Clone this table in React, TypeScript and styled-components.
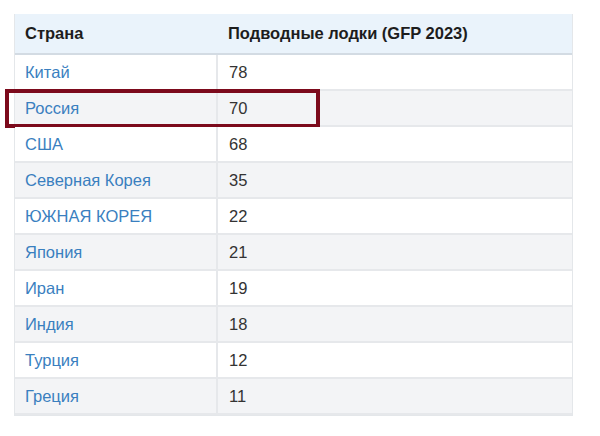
import React from "react";
import styled, { createGlobalStyle } from "styled-components";

interface Row {
  country: string;
  subs: number;
}

const rows: Row[] = [
  { country: "Китай", subs: 78 },
  { country: "Россия", subs: 70 },
  { country: "США", subs: 68 },
  { country: "Северная Корея", subs: 35 },
  { country: "ЮЖНАЯ КОРЕЯ", subs: 22 },
  { country: "Япония", subs: 21 },
  { country: "Иран", subs: 19 },
  { country: "Индия", subs: 18 },
  { country: "Турция", subs: 12 },
  { country: "Греция", subs: 11 },
];

const GlobalStyle = createGlobalStyle`
  body {
    margin: 0;
    background: #ffffff;
    font-family: "Liberation Sans", Arial, sans-serif;
  }
`;

const Page = styled.div`
  width: 600px;
  height: 436px;
  padding: 14px 0 0 14px;
  box-sizing: border-box;
`;

const Table = styled.div`
  width: 559px;
  border: 1px solid #e4e7ea;
  border-top: none;
  box-sizing: border-box;
`;

const Header = styled.div`
  display: grid;
  grid-template-columns: 203px 1fr;
  height: 39px;
  align-items: center;
  background: #eaf3fb;
  border-bottom: 2px solid #d3dbe3;
  font-size: 16.5px;
  font-weight: bold;
  color: #1d1d1d;
`;

const HeadCell = styled.div`
  padding-left: 10px;
`;

const BodyRow = styled.div<{ $striped: boolean }>`
  position: relative;
  display: grid;
  grid-template-columns: 203px 1fr;
  height: 36px;
  background: ${(p) => (p.$striped ? "#f3f4f6" : "#ffffff")};
  border-bottom: 2px solid #e6e8eb;
  box-sizing: border-box;
  font-size: 16.5px;
`;

const Cell = styled.div<{ $first?: boolean }>`
  display: flex;
  align-items: center;
  padding-left: ${(p) => (p.$first ? "10px" : "11px")};
  color: ${(p) => (p.$first ? "#3a7fbf" : "#333333")};
  border-right: ${(p) => (p.$first ? "2px solid #e6e8eb" : "none")};
`;

// рамка вокруг строки России
const Highlight = styled.div`
  position: absolute;
  left: -10px;
  top: -2px;
  width: 315px;
  height: 39px;
  border: 4px solid #7c0a1c;
  box-sizing: border-box;
  pointer-events: none;
`;

export default function App() {
  return (
    <>
      <GlobalStyle />
      <Page>
        <Table>
          <Header>
            <HeadCell>Страна</HeadCell>
            <HeadCell>Подводные лодки (GFP 2023)</HeadCell>
          </Header>
          {rows.map((r, i) => (
            <BodyRow key={r.country} $striped={i % 2 === 1}>
              <Cell $first>{r.country}</Cell>
              <Cell>{r.subs}</Cell>
              {r.country === "Россия" && <Highlight />}
            </BodyRow>
          ))}
        </Table>
      </Page>
    </>
  );
}
